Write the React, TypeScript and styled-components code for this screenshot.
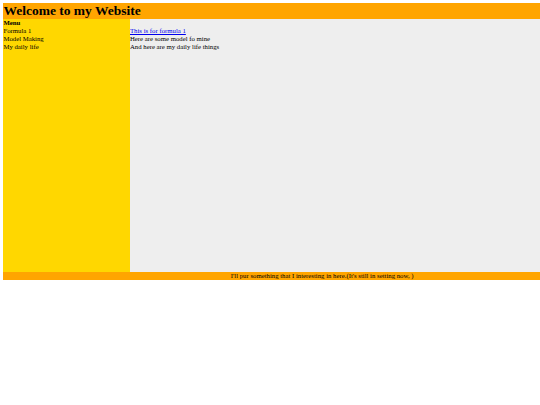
import styled, { createGlobalStyle } from 'styled-components';

const GlobalStyle = createGlobalStyle`
  body {
    margin: 3.4px 0 0 3.4px;
    font-family: "Liberation Serif", "Times New Roman", serif;
    font-size: 6.75px;
    color: #000;
    background: #fff;
  }
`;

const Page = styled.div`
  width: 100%;
`;

const Header = styled.header`
  background-color: #ffa500;
  height: 16px;
`;

const Title = styled.h1`
  margin: 0;
  font-size: 13.5px;
  line-height: 16px;
  font-weight: bold;
`;

const Body = styled.div`
  display: flex;
  height: 253px;
`;

const Sidebar = styled.nav`
  width: 126.6px;
  flex-shrink: 0;
  background-color: #ffd700;
  line-height: 7.76px;
`;

const MenuTitle = styled.div`
  font-weight: bold;
`;

const Content = styled.main`
  flex: 1;
  background-color: #eeeeee;
  padding-top: 7.76px;
  line-height: 7.76px;
`;

const Line = styled.div``;

const Link = styled.a`
  color: #0000ee;
  text-decoration: underline;
`;

const Footer = styled.footer`
  background-color: #ffa500;
  text-align: center;
  padding-left: 101px;
  line-height: 7.76px;
`;

export default function App() {
  return (
    <>
      <GlobalStyle />
      <Page>
        <Header>
          <Title>Welcome to my Website</Title>
        </Header>
        <Body>
          <Sidebar>
            <MenuTitle>Menu</MenuTitle>
            <Line>Formula 1</Line>
            <Line>Model Making</Line>
            <Line>My daily life</Line>
          </Sidebar>
          <Content>
            <Line>
              <Link href="#">This is for formula 1</Link>
            </Line>
            <Line>Here are some model fo mine</Line>
            <Line>And here are my daily life things</Line>
          </Content>
        </Body>
        <Footer>I'll pur something that I interesting in here.(It's still in setting now, )</Footer>
      </Page>
    </>
  );
}
